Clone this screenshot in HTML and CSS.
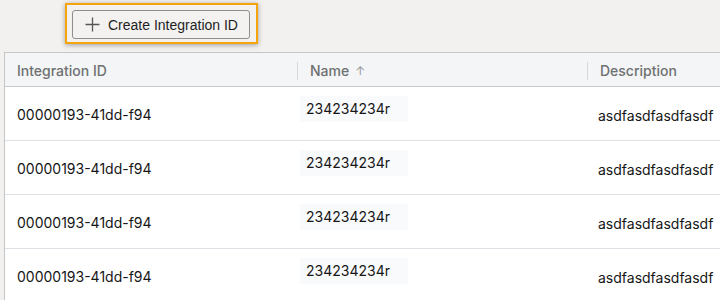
FILE: index.html
```html
<!DOCTYPE html>
<html>
<head>
<meta charset="utf-8">
<link rel="stylesheet" href="styles.css">
</head>
<body>
<div class="toolbar">
  <div class="highlight">
    <button class="btn">
      <svg class="plus" width="15" height="15" viewBox="0 0 15 15"><path d="M7.5 0.5v14M0.5 7.5h14" stroke="#555" stroke-width="1.3" fill="none"/></svg>
      <span>Create Integration ID</span>
    </button>
  </div>
</div>
<div class="table">
  <div class="row head">
    <div class="hcell"><span class="label">Integration ID</span></div>
    <div class="hcell"><span class="sep"></span><span class="label">Name</span><span class="sort">↑</span></div>
    <div class="hcell"><span class="sep"></span><span class="label">Description</span></div>
  </div>
  <div class="row">
    <div class="cell id">00000193-41dd-f94</div>
    <div class="cell name"><span class="box">234234234r</span></div>
    <div class="cell desc">asdfasdfasdfasdf</div>
  </div>
  <div class="row">
    <div class="cell id">00000193-41dd-f94</div>
    <div class="cell name"><span class="box">234234234r</span></div>
    <div class="cell desc">asdfasdfasdfasdf</div>
  </div>
  <div class="row">
    <div class="cell id">00000193-41dd-f94</div>
    <div class="cell name"><span class="box">234234234r</span></div>
    <div class="cell desc">asdfasdfasdfasdf</div>
  </div>
  <div class="row">
    <div class="cell id">00000193-41dd-f94</div>
    <div class="cell name"><span class="box">234234234r</span></div>
    <div class="cell desc">asdfasdfasdfasdf</div>
  </div>
</div>
</body>
</html>
```
FILE: styles.css
```css
html, body {
  margin: 0;
  padding: 0;
  background: #f2f1f0;
  overflow: hidden;
  width: 720px;
  height: 300px;
}
.toolbar {
  display: flex;
  padding: 3px 0 0 65px;
  height: 52px;
  box-sizing: border-box;
}
.highlight {
  border: 2px solid #f3a40f;
  padding: 5px;
  height: 41px;
  width: 193px;
  box-sizing: border-box;
  box-shadow: 0 1px 5px rgba(0,0,0,0.35);
}
.btn {
  display: flex;
  align-items: center;
  width: 178px;
  height: 29px;
  margin: 0;
  padding: 0 0 0 12px;
  box-sizing: border-box;
  border: 1px solid #8e8e8e;
  border-radius: 3px;
  background: #f3f2f1;
  font-family: "Liberation Sans", Arial, sans-serif;
  font-size: 14px;
  color: #1e1e1e;
}
.plus {
  margin-right: 8px;
}
.table {
  margin-left: 4px;
  width: 716px;
  overflow: hidden;
  border-top: 1px solid #c6c6c6;
  border-left: 1px solid #c6c6c6;
  background: #fff;
}
.row {
  display: grid;
  grid-template-columns: 292px 290px 1fr;
  height: 54px;
  box-sizing: border-box;
  border-bottom: 1px solid #dde0e4;
  align-items: center;
}
.row.head {
  height: 34px;
  background: #f3f5f7;
  border-bottom: 1px solid #c7cacd;
}
.hcell {
  display: flex;
  align-items: center;
  height: 100%;
  font-family: Inter, "Liberation Sans", sans-serif;
  font-weight: 500;
  font-size: 14px;
  color: #6f7071;
  padding-top: 2px;
  box-sizing: border-box;
}
.hcell:first-child .label {
  margin-left: 12px;
}
.sep {
  width: 1px;
  height: 18px;
  background: #d6d9dc;
  margin-right: 12px;
}
.sort {
  font-weight: normal;
  font-size: 12px;
  color: #9a9a9a;
  margin-left: 6px;
}
.cell {
  font-family: Inter, "Liberation Sans", sans-serif;
  font-size: 14px;
  color: #161616;
}
.cell.id {
  padding-left: 12px;
  padding-top: 1px;
}
.cell.name {
  align-self: start;
  margin-top: 9px;
  padding-left: 3px;
}
.box {
  display: inline-block;
  width: 108px;
  box-sizing: border-box;
  padding: 4px 6px;
  line-height: 18px;
  background: #f9fafc;
}
.cell.desc {
  padding-left: 11px;
  padding-top: 4px;
}
```
